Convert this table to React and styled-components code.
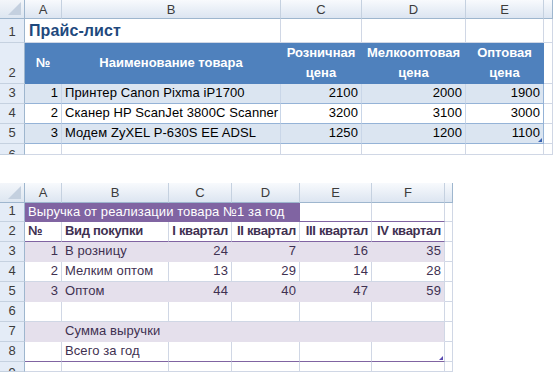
import React from "react";
import styled, { createGlobalStyle, css } from "styled-components";

const Global = createGlobalStyle`
  html, body { margin: 0; padding: 0; background: #ffffff; }
  body { font-family: "Liberation Sans", Arial, sans-serif; }
`;

const GRID = "#d0d7e5";
const HEAD_BORDER = "#9eb6ce";

const Page = styled.div`
  width: 553px;
  height: 372px;
  overflow: hidden;
  display: flex;
  flex-direction: column;
  gap: 28px;
`;

const Sheet = styled.div`
  display: grid;
  grid-template-columns: ${(p) => p.$cols};
  grid-template-rows: ${(p) => p.$rows};
  width: max-content;
`;

const Corner = styled.div`
  position: relative;
  box-sizing: border-box;
  background: linear-gradient(#f3f6fa, #dde6f1);
  border-right: 1px solid ${HEAD_BORDER};
  border-bottom: 1px solid ${HEAD_BORDER};
  &::after {
    content: "";
    position: absolute;
    right: 3px;
    bottom: 3px;
    width: 13px;
    height: 13px;
    background: #c4d0df;
    clip-path: polygon(100% 0, 100% 100%, 0 100%);
  }
`;

const ColHead = styled.div`
  box-sizing: border-box;
  display: flex;
  align-items: center;
  justify-content: center;
  background: linear-gradient(#f8fafd, #dce5f1);
  border-right: 1px solid ${(p) => (p.$edge ? HEAD_BORDER : "#c5d1e0")};
  border-bottom: 1px solid ${HEAD_BORDER};
  font-size: 13px;
  color: #3c3c3c;
`;

const RowHead = styled.div`
  box-sizing: border-box;
  display: flex;
  align-items: ${(p) => (p.$clip ? "flex-start" : "flex-end")};
  justify-content: center;
  padding-bottom: 2px;
  padding-top: ${(p) => (p.$clip ? "3px" : "0")};
  background: #e4ecf7;
  border-right: 1px solid ${HEAD_BORDER};
  border-bottom: 1px solid #c5d1e0;
  font-size: 13px;
  line-height: 16px;
  color: #3c3c3c;
  overflow: hidden;
`;

const Cell = styled.div`
  box-sizing: border-box;
  display: flex;
  align-items: ${(p) => (p.$valign === "center" ? "center" : "flex-end")};
  justify-content: ${(p) =>
    p.$align === "right" ? "flex-end" : p.$align === "center" ? "center" : "flex-start"};
  text-align: ${(p) => p.$align || "left"};
  padding: 0 3px 2px 3px;
  white-space: nowrap;
  overflow: visible;
  background: ${(p) => p.$bg || "transparent"};
  border-right: 1px solid ${(p) => p.$br || GRID};
  border-bottom: 1px solid ${(p) => p.$bb || GRID};
  color: ${(p) => p.$color || "#000"};
  font-size: 13px;
  line-height: 16px;
  letter-spacing: 0.1px;
  font-weight: ${(p) => (p.$bold ? 700 : 400)};
  ${(p) => p.$bold && css`letter-spacing: -0.3px;`}
  ${(p) => p.$span && css`grid-column: span ${p.$span};`}
  ${(p) => p.$pad && css`padding-bottom: ${p.$pad}px;`}
`;

const Title = styled(Cell)`
  font-size: 16px;
  font-weight: 700;
  color: #1f497d;
  letter-spacing: 0.1px;
  padding-bottom: 3px;
  padding-left: 4px;
`;

const HeadCell = styled(Cell)`
  background: #4f81bd;
  color: #ffffff;
  font-weight: 700;
  letter-spacing: 0;
  border-right-color: #4f81bd;
  border-bottom-color: #4f81bd;
  white-space: normal;
  line-height: 20px;
  padding-bottom: 0;
`;

const MarkCell = styled(Cell)`
  position: relative;
  &::after {
    content: "";
    position: absolute;
    right: 1px;
    bottom: 1px;
    width: 4px;
    height: 4px;
    background: ${(p) => p.$mark};
    clip-path: polygon(100% 0, 100% 100%, 0 100%);
  }
`;

/* ---------- Sheet 1 ---------- */
const B1 = "#dbe5f1";
const BLINE = "#95b3d7";

const priceRows = [
  ["1", "Принтер Canon Pixma iP1700", "2100", "2000", "1900"],
  ["2", "Сканер HP ScanJet 3800C Scanner", "3200", "3100", "3000"],
  ["3", "Модем ZyXEL P-630S EE ADSL", "1250", "1200", "1100"],
];

function PriceSheet() {
  const letters = ["A", "B", "C", "D", "E"];
  return (
    <Sheet $cols="25px 37px 219px 81px 104px 78px 9px" $rows="19px 24px 41px 20px 20px 20px 11px">
      <Corner />
      {letters.map((l) => (
        <ColHead key={l}>{l}</ColHead>
      ))}
      <ColHead $edge />

      <RowHead>1</RowHead>
      <Title $span={2}>Прайс-лист</Title>
      <Cell />
      <Cell />
      <Cell />
      <Cell />

      <RowHead>2</RowHead>
      <HeadCell $align="center" $valign="center">№</HeadCell>
      <HeadCell $align="center" $valign="center">Наименование товара</HeadCell>
      <HeadCell $align="center" $valign="center">Розничная<br />цена</HeadCell>
      <HeadCell $align="center" $valign="center">Мелкооптовая<br />цена</HeadCell>
      <HeadCell $align="center" $valign="center">Оптовая<br />цена</HeadCell>
      <Cell />

      {priceRows.map((r, i) => {
        const bg = i % 2 === 0 ? B1 : "#ffffff";
        const last = i === priceRows.length - 1;
        const LastCell = last ? MarkCell : Cell;
        return (
          <React.Fragment key={r[0]}>
            <RowHead>{3 + i}</RowHead>
            <Cell $bg={bg} $bb={BLINE} $br="#c9d6e8" $align="right">{r[0]}</Cell>
            <Cell $bg={bg} $bb={BLINE} $br="#c9d6e8">{r[1]}</Cell>
            <Cell $bg={bg} $bb={BLINE} $br="#c9d6e8" $align="right">{r[2]}</Cell>
            <Cell $bg={bg} $bb={BLINE} $br="#c9d6e8" $align="right">{r[3]}</Cell>
            <LastCell $bg={bg} $bb={BLINE} $br={BLINE} $align="right" $mark="#3a63b0">
              {r[4]}
            </LastCell>
            <Cell />
          </React.Fragment>
        );
      })}

      <RowHead $clip>6</RowHead>
      <Cell />
      <Cell />
      <Cell />
      <Cell />
      <Cell />
      <Cell />
    </Sheet>
  );
}

/* ---------- Sheet 2 ---------- */
const P = "#8064a2";
const PF = "#e5e0ec";
const PT = "#3f3151";

const salesRows = [
  ["1", "В розницу", "24", "7", "16", "35"],
  ["2", "Мелким оптом", "13", "29", "14", "28"],
  ["3", "Оптом", "44", "40", "47", "59"],
  ["", "", "", "", "", ""],
  ["", "Сумма выручки", "", "", "", ""],
  ["", "Всего за год", "", "", "", ""],
];

function SalesSheet() {
  const letters = ["A", "B", "C", "D", "E", "F"];
  const heads = ["№", "Вид покупки", "I квартал", "II квартал", "III квартал", "IV квартал"];
  return (
    <Sheet $cols="25px 37px 107px 63px 68px 72px 73px 8px" $rows="20px 19px 20px 20px 20px 20px 20px 20px 20px 10px">
      <Corner />
      {letters.map((l) => (
        <ColHead key={l}>{l}</ColHead>
      ))}
      <ColHead $edge />

      <RowHead>1</RowHead>
      <Cell $span={4} $bg={P} $br={P} $bb={P} $color="#ffffff" $pad={1}>
        Выручка от реализации товара №1 за год
      </Cell>
      <Cell $bb={P} />
      <Cell $bb={P} />
      <Cell />

      <RowHead>2</RowHead>
      {heads.map((h, i) => (
        <Cell key={h} $bold $color={PT} $bb={P} $align={i < 2 ? "left" : "right"}>
          {h}
        </Cell>
      ))}
      <Cell />

      {salesRows.map((r, i) => {
        const filled = i % 2 === 0;
        const bg = filled ? PF : "#ffffff";
        const last = i === salesRows.length - 1;
        const bb = last ? P : filled ? PF : GRID;
        return (
          <React.Fragment key={i}>
            <RowHead>{3 + i}</RowHead>
            {r.map((v, j) => {
              const br = filled && j < 5 ? PF : GRID;
              const C = last && j === 5 ? MarkCell : Cell;
              return (
                <C key={j} $bg={bg} $bb={bb} $br={br} $color={PT} $mark="#5a4ab0" $align={j === 1 ? "left" : "right"}>
                  {v}
                </C>
              );
            })}
            <Cell />
          </React.Fragment>
        );
      })}

      <RowHead $clip>9</RowHead>
      <Cell />
      <Cell />
      <Cell />
      <Cell />
      <Cell />
      <Cell />
      <Cell />
    </Sheet>
  );
}

export default function App() {
  return (
    <>
      <Global />
      <Page>
        <PriceSheet />
        <SalesSheet />
      </Page>
    </>
  );
}
